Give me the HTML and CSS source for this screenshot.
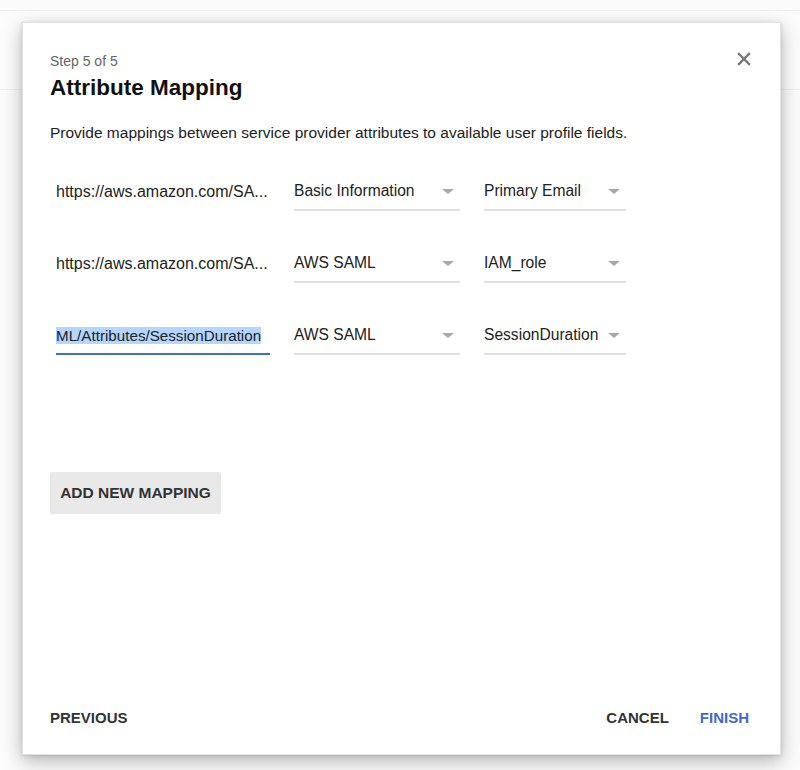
FILE: index.html
```html
<!DOCTYPE html>
<html lang="en">
<head>
  <meta charset="UTF-8">
  <title>Attribute Mapping</title>
  <link rel="stylesheet" href="styles.css">
</head>
<body>
  <div class="backdrop">
    <div class="topbar"></div>
  </div>

  <div class="dialog" role="dialog" aria-labelledby="dlgTitle">
    <button class="close" aria-label="Close">
      <svg width="14" height="14" viewBox="0 0 14 14" aria-hidden="true">
        <path d="M2 2 L12 12 M12 2 L2 12" stroke="#777" stroke-width="2.4" stroke-linecap="square"/>
      </svg>
    </button>

    <div class="step">Step 5 of 5</div>
    <h1 id="dlgTitle">Attribute Mapping</h1>
    <p class="desc">Provide mappings between service provider attributes to available user profile fields.</p>

    <div class="mappings">
      <div class="mapping">
        <div class="attr">https://aws.amazon.com/SA...</div>
        <div class="select wide"><span>Basic Information</span><i class="caret"></i></div>
        <div class="select"><span>Primary Email</span><i class="caret"></i></div>
      </div>
      <div class="mapping">
        <div class="attr">https://aws.amazon.com/SA...</div>
        <div class="select wide"><span>AWS SAML</span><i class="caret"></i></div>
        <div class="select"><span>IAM_role</span><i class="caret"></i></div>
      </div>
      <div class="mapping">
        <div class="attr focused"><span class="sel">ML/Attributes/SessionDuration</span></div>
        <div class="select wide"><span>AWS SAML</span><i class="caret"></i></div>
        <div class="select"><span>SessionDuration</span><i class="caret"></i></div>
      </div>
    </div>

    <button class="add-btn">ADD NEW MAPPING</button>

    <div class="footer">
      <button class="flat">PREVIOUS</button>
      <div class="actions">
        <button class="flat">CANCEL</button>
        <button class="flat primary">FINISH</button>
      </div>
    </div>
  </div>
</body>
</html>
```

FILE: styles.css
```css
* {
  box-sizing: border-box;
}

body {
  margin: 0;
  width: 800px;
  height: 770px;
  background: #fbfbfb;
  font-family: "Liberation Sans", Arial, sans-serif;
  color: #212121;
  overflow: hidden;
  position: relative;
}

/* page behind the dialog */
.backdrop {
  position: absolute;
  inset: 0;
}

.topbar {
  height: 80px;
  margin-top: 10px;
  border-top: 1px solid #f0f0f0;
  border-bottom: 1px solid #f0f0f0;
  background: #fcfcfc;
}

.dialog {
  position: absolute;
  left: 22px;
  top: 22px;
  width: 759px;
  height: 733px;
  background: #fff;
  border: 1px solid #e2e2e2;
  box-shadow: 0 6px 18px rgba(0,0,0,0.28), 0 1px 4px rgba(0,0,0,0.12);
  padding: 29px 31px 0 27px;
  display: flex;
  flex-direction: column;
}

.close {
  position: absolute;
  right: 29px;
  top: 29px;
  background: none;
  border: none;
  padding: 0;
  width: 14px;
  height: 14px;
  cursor: pointer;
}

.step {
  font-size: 14px;
  color: #666;
  line-height: 18px;
}

h1 {
  margin: 4px 0 0 0;
  font-size: 22.5px;
  font-weight: 700;
  color: #111;
  line-height: 28px;
}

.desc {
  margin: 21px 0 0 0;
  font-size: 15.5px;
  line-height: 20px;
  color: #222;
}

.mappings {
  margin-top: 30px;
  display: flex;
  flex-direction: column;
  gap: 34px;
}

.mapping {
  display: flex;
  gap: 24px;
  padding-left: 6px;
}

.attr {
  width: 214px;
  height: 38px;
  font-size: 16px;
  line-height: 22px;
  padding-top: 8px;
  white-space: nowrap;
  color: #222;
}

.attr.focused {
  font-size: 15.2px;
  border-bottom: 2px solid #3b6fd6;
}

.attr .sel {
  background: #b4d5fe;
}

.select {
  width: 142px;
  height: 38px;
  border-bottom: 2px solid #e0e0e0;
  display: flex;
  align-items: flex-start;
  justify-content: space-between;
  padding-top: 7px;
  font-size: 15.6px;
  line-height: 22px;
  color: #222;
}

.select.wide {
  width: 166px;
}

.caret {
  flex-shrink: 0;
  width: 0;
  height: 0;
  margin: 9px 6px 0 0;
  border-left: 6px solid transparent;
  border-right: 6px solid transparent;
  border-top: 5px solid #aaa;
}

.add-btn {
  align-self: flex-start;
  margin-top: 117px;
  height: 42px;
  width: 171px;
  padding: 0;
  background: #e9e9e9;
  border: none;
  border-radius: 2px;
  font-family: inherit;
  font-size: 15.5px;
  font-weight: 700;
  color: #333;
  cursor: pointer;
}

.footer {
  margin-top: auto;
  height: 45px;
  display: flex;
  justify-content: space-between;
  align-items: flex-start;
}

.actions {
  display: flex;
  gap: 31px;
}

.flat {
  background: none;
  border: none;
  padding: 0;
  font-family: inherit;
  font-size: 15px;
  font-weight: 700;
  color: #333;
  cursor: pointer;
}

.flat.primary {
  color: #4069d3;
}
```
